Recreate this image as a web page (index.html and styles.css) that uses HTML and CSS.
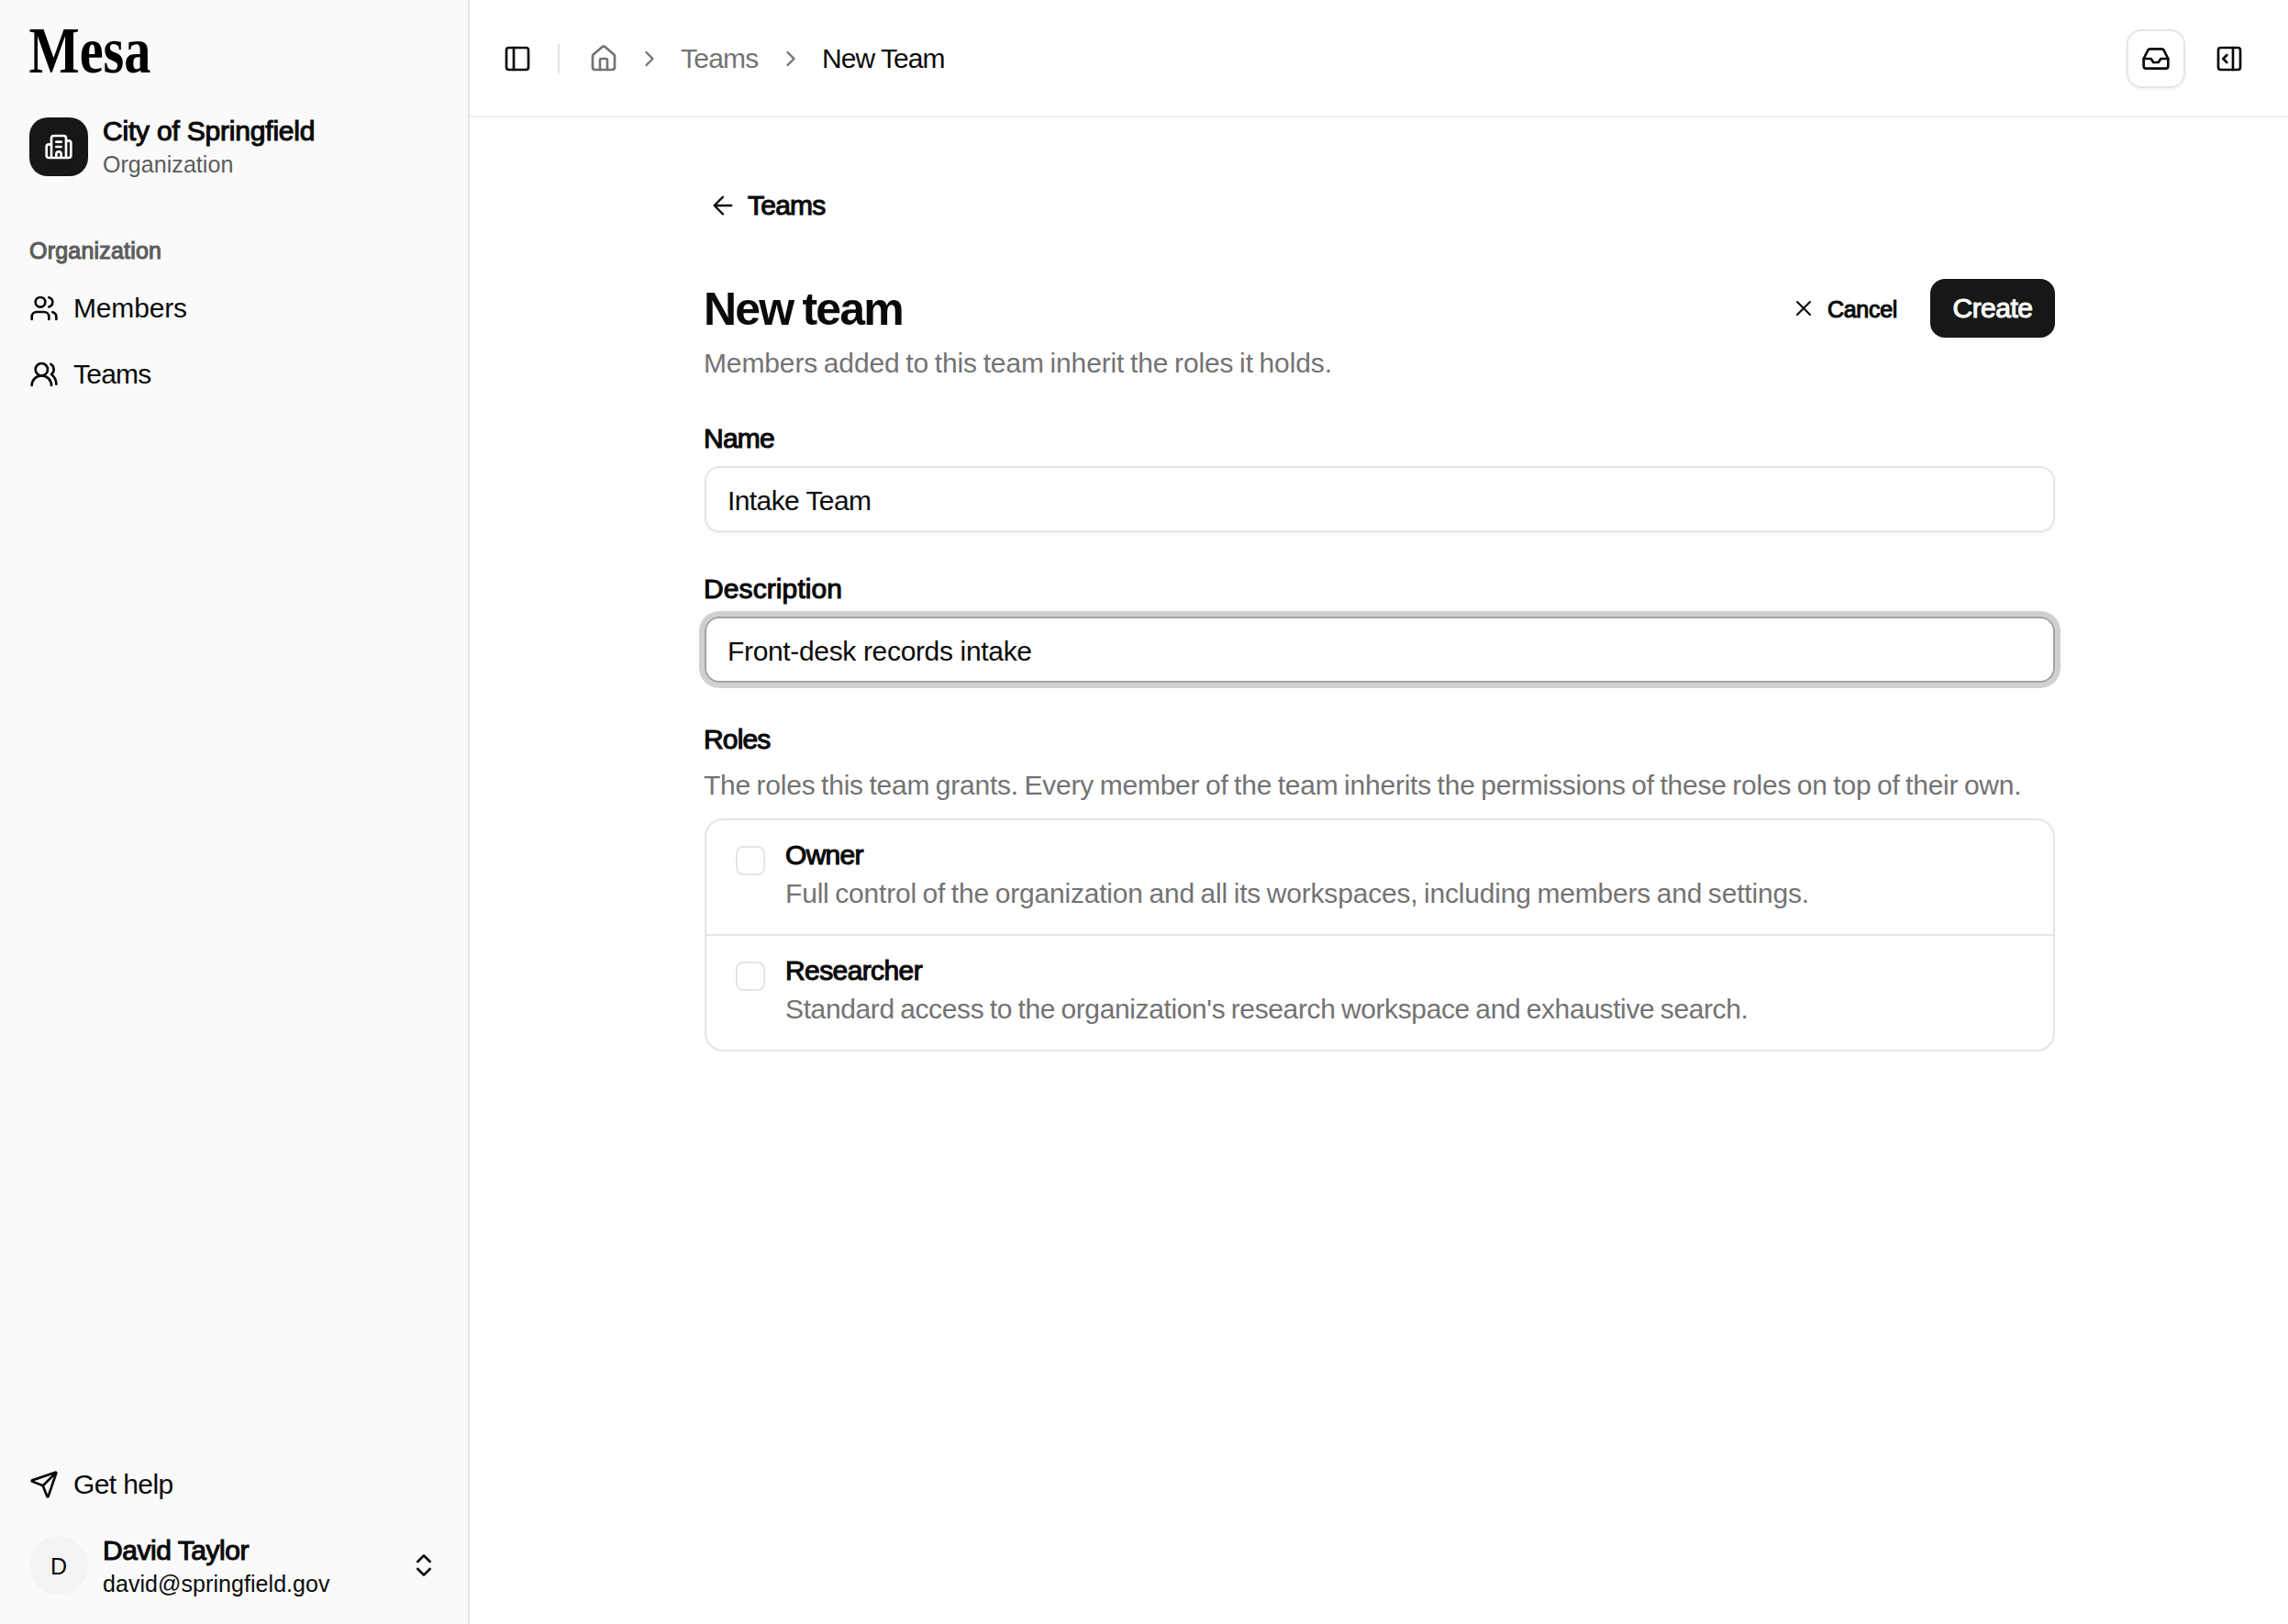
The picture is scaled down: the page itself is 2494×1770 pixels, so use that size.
FILE: index.html
```html
<!DOCTYPE html>
<html lang="en">
<head>
<meta charset="utf-8">
<title>New Team</title>
<link rel="stylesheet" href="styles.css">
</head>
<body>
<aside class="sidebar">
  <svg class="logo" width="140" height="72" viewBox="0 0 140 72"><text x="-0.5" y="55" textLength="133" lengthAdjust="spacingAndGlyphs">Mesa</text></svg>
  <div class="org">
    <span class="org-icon"><svg class="icon" viewBox="0 0 24 24"><path d="M10 12h4M10 8h4M14 21v-3a2 2 0 0 0-4 0v3M6 10H4a2 2 0 0 0-2 2v7a2 2 0 0 0 2 2h16a2 2 0 0 0 2-2V9a2 2 0 0 0-2-2h-2M6 21V5a2 2 0 0 1 2-2h8a2 2 0 0 1 2 2v16"/></svg></span>
    <div class="stack"><span class="t medium name">City of Springfield</span><span class="t small muted-dark sub">Organization</span></div>
  </div>
  <div class="section"><span class="t small medium muted-dark label">Organization</span></div>
  <nav class="nav">
    <a class="nav-item"><svg class="icon" viewBox="0 0 24 24"><path d="M16 21v-2a4 4 0 0 0-4-4H6a4 4 0 0 0-4 4v2M16 3.128a4 4 0 0 1 0 7.744M22 21v-2a4 4 0 0 0-3-3.87"/><circle cx="9" cy="7" r="4"/></svg><span class="t members">Members</span></a>
    <a class="nav-item"><svg class="icon" viewBox="0 0 24 24"><path d="M18 21a8 8 0 0 0-16 0"/><circle cx="10" cy="8" r="5"/><path d="M22 20c0-3.37-2-6.5-4-8a5 5 0 0 0-.45-8.3"/></svg><span class="t teams">Teams</span></a>
  </nav>
  <a class="nav-item help"><svg class="icon" viewBox="0 0 24 24"><path d="M14.536 21.686a.5.5 0 0 0 .937-.024l6.5-19a.496.496 0 0 0-.635-.635l-19 6.5a.5.5 0 0 0-.024.937l7.93 3.18a2 2 0 0 1 1.112 1.11zM21.854 2.147l-10.94 10.939"/></svg><span class="t gethelp">Get help</span></a>
  <div class="user">
    <span class="avatar"><span class="t small initial">D</span></span>
    <div class="stack"><span class="t medium uname">David Taylor</span><span class="t small email">david@springfield.gov</span></div>
    <svg class="icon updown" viewBox="0 0 24 24"><path d="m7 15 5 5 5-5M7 9l5-5 5 5"/></svg>
  </div>
</aside>
<div class="page">
  <header class="topbar">
    <svg class="icon" viewBox="0 0 24 24"><rect width="18" height="18" x="3" y="3" rx="2"/><path d="M9 3v18"/></svg>
    <span class="rule"></span>
    <nav class="crumbs">
      <svg class="icon" viewBox="0 0 24 24"><path d="M15 21v-8a1 1 0 0 0-1-1h-4a1 1 0 0 0-1 1v8"/><path d="M3 10a2 2 0 0 1 .709-1.528l7-5.999a2 2 0 0 1 2.582 0l7 5.999A2 2 0 0 1 21 10v9a2 2 0 0 1-2 2H5a2 2 0 0 1-2-2z"/></svg>
      <svg class="icon icon-sm" viewBox="0 0 24 24"><path d="m9 18 6-6-6-6"/></svg>
      <span class="crumb-link"><span class="t teams">Teams</span></span>
      <svg class="icon icon-sm" viewBox="0 0 24 24"><path d="m9 18 6-6-6-6"/></svg>
      <span class="t current">New Team</span>
    </nav>
    <div class="tools">
      <button class="inbox"><svg class="icon" viewBox="0 0 24 24"><path d="M22 12h-6l-2 3h-4l-2-3H2"/><path d="M5.45 5.11 2 12v6a2 2 0 0 0 2 2h16a2 2 0 0 0 2-2v-6l-3.45-6.89A2 2 0 0 0 16.76 4H7.24a2 2 0 0 0-1.79 1.11z"/></svg></button>
      <svg class="icon" viewBox="0 0 24 24"><rect width="18" height="18" x="3" y="3" rx="2"/><path d="M15 3v18M10 15l-3-3 3-3"/></svg>
    </div>
  </header>
  <main class="content">
    <a class="back"><svg class="icon thin" viewBox="0 0 24 24"><path d="m12 19-7-7 7-7M19 12H5"/></svg><span class="t medium teams">Teams</span></a>
    <div class="head">
      <div class="stack"><h1 class="title">New team</h1><p class="t muted lead">Members added to this team inherit the roles it holds.</p></div>
      <div class="actions">
        <button class="cancel"><svg class="icon icon-sm thin" viewBox="0 0 24 24"><path d="M18 6 6 18M6 6l12 12"/></svg><span class="t small medium cancel-text">Cancel</span></button>
        <button class="create"><span class="t medium create-text">Create</span></button>
      </div>
    </div>
    <div class="field"><label class="field-label medium name-label">Name</label><div class="input"><span class="t name-value">Intake Team</span></div></div>
    <div class="field"><label class="field-label medium description-label">Description</label><div class="input focus"><span class="t description-value">Front-desk records intake</span></div></div>
    <div class="field"><label class="field-label medium roles-label">Roles</label><p class="t muted hint">The roles this team grants. Every member of the team inherits the permissions of these roles on top of their own.</p>
      <div class="roles">
        <div class="role"><span class="check"></span><div class="stack"><span class="t medium owner">Owner</span><span class="t muted owner-info">Full control of the organization and all its workspaces, including members and settings.</span></div></div>
        <div class="role"><span class="check"></span><div class="stack"><span class="t medium researcher">Researcher</span><span class="t muted researcher-info">Standard access to the organization's research workspace and exhaustive search.</span></div></div>
      </div>
    </div>
  </main>
</div>
</body>
</html>
```
FILE: styles.css
```css
* { box-sizing: border-box; margin: 0; padding: 0; }
body {
  display: flex;
  width: 2494px;
  height: 1770px;
  overflow: hidden;
  background: #fff;
  color: #0a0a0a;
  font-family: "Liberation Sans", Arial, sans-serif;
  font-size: 30px;
  line-height: 40px;
}
button { border: 0; background: none; font: inherit; color: inherit; }
.t { white-space: nowrap; }
.small { font-size: 25px; line-height: 32px; }
.medium { -webkit-text-stroke: 1.1px currentColor; }
.muted { color: #737373; word-spacing: -1.5px; }
.muted-dark { color: #5c5c5c; }
.stack { display: flex; flex-direction: column; align-items: flex-start; }
.icon {
  width: 32px;
  height: 32px;
  flex: none;
  fill: none;
  stroke: currentColor;
  stroke-width: 2;
  stroke-linecap: round;
  stroke-linejoin: round;
}
.icon-sm { width: 28px; height: 28px; }
.thin { stroke-width: 1.75; }

/* Sidebar */
.sidebar {
  display: flex;
  flex-direction: column;
  width: 512px;
  flex: none;
  padding: 24px 32px 32px;
  background: #fafafa;
  border-right: 2px solid #e5e5e5;
}
.logo { display: block; margin-bottom: 32px; font: bold 71px "Liberation Serif", serif; overflow: visible; fill: #000; }
.org, .user { display: flex; align-items: center; height: 64px; gap: 16px; }
.org-icon { display: grid; place-items: center; width: 64px; height: 64px; border-radius: 20px; background: #171717; color: #fff; }
.org .stack { margin-top: -2px; }
.name { letter-spacing: -0.2px; }
.sub { letter-spacing: 0.05px; }
.section { display: flex; margin-top: 65px; margin-bottom: 15px; }
.label { letter-spacing: 0.2px; }
.nav { display: flex; flex-direction: column; gap: 8px; }
.nav-item { display: flex; align-items: center; gap: 16px; height: 64px; }
.members { letter-spacing: -0.15px; }
.teams { letter-spacing: -0.75px; }
.gethelp { letter-spacing: -0.6px; }
.help { margin-top: auto; margin-bottom: 24px; }
.avatar { display: grid; place-items: center; width: 64px; height: 64px; border-radius: 50%; background: #f4f4f4; }
.initial { padding-top: 2px; }
.user .stack { margin-top: -1px; }
.uname { letter-spacing: -0.46px; }
.email { letter-spacing: 0.06px; }
.updown { margin-left: auto; }

/* Top bar */
.page { flex: 1; min-width: 0; }
.topbar { display: flex; align-items: center; height: 128px; padding: 2px 48px 0 36px; border-bottom: 2px solid #f1f1f1; }
.rule { width: 2px; height: 32px; margin: 0 32px 0 28px; background: #e5e5e5; }
.crumbs { display: flex; align-items: center; gap: 20px; color: #737373; }
.crumb-link { width: 86px; display: flex; }
.current { color: #0a0a0a; letter-spacing: -0.95px; }
.tools { display: flex; align-items: center; gap: 32px; margin-left: auto; }
.inbox { display: grid; place-items: center; width: 64px; height: 64px; border: 2px solid #e5e5e5; border-radius: 16px; box-shadow: 0 2px 4px rgba(0, 0, 0, 0.05); }

/* Form */
.content { width: 1728px; padding: 64px 0 0 256px; }
.back { display: flex; align-items: center; gap: 11px; height: 64px; padding-left: 4px; }
.head { display: flex; justify-content: space-between; margin-top: 48px; height: 112px; }
.title { margin: 0 0 6px -1px; font-size: 50px; line-height: 66px; font-weight: 700; letter-spacing: -1.8px; word-spacing: -2px; }
.lead { margin-left: -1px; letter-spacing: -0.13px; }
.actions { display: flex; height: 64px; gap: 36px; }
.cancel { display: flex; align-items: center; gap: 12px; }
.cancel-text { padding-top: 2px; letter-spacing: -0.3px; }
.create { width: 136px; height: 64px; border-radius: 16px; background: #171717; color: #fafafa; box-shadow: 0 2px 4px rgba(0, 0, 0, 0.05); }
.create-text { letter-spacing: -0.5px; }
.field { display: flex; flex-direction: column; margin-top: 42px; }
.field-label { margin: 0 0 10px -1px; }
.name-label { letter-spacing: -0.78px; }
.description-label { letter-spacing: 0.1px; }
.roles-label { letter-spacing: -0.85px; }
.input { display: flex; align-items: center; height: 72px; padding: 3px 23px 0; border: 2px solid #e5e5e5; border-radius: 16px; box-shadow: 0 2px 4px rgba(0, 0, 0, 0.05); }
.focus { border-color: #a1a1a1; box-shadow: 0 0 0 6px #d0d0d0; }
.name-value { letter-spacing: -0.59px; }
.description-value { letter-spacing: -0.34px; }
.hint { margin: 0 0 16px -1px; letter-spacing: -0.23px; }
.roles { border: 2px solid #e5e5e5; border-radius: 20px; }
.role { display: flex; gap: 22px; height: 124px; padding: 18px 32px 0; }
.role + .role { border-top: 2px solid #e5e5e5; height: 126px; }
.role .stack { gap: 2px; }
.check { width: 32px; height: 32px; margin-top: 10px; border: 2px solid #e5e5e5; border-radius: 8px; }
.owner { letter-spacing: -0.69px; }
.researcher { letter-spacing: -0.6px; }
.owner-info { letter-spacing: -0.19px; }
.researcher-info { letter-spacing: -0.38px; }
```
